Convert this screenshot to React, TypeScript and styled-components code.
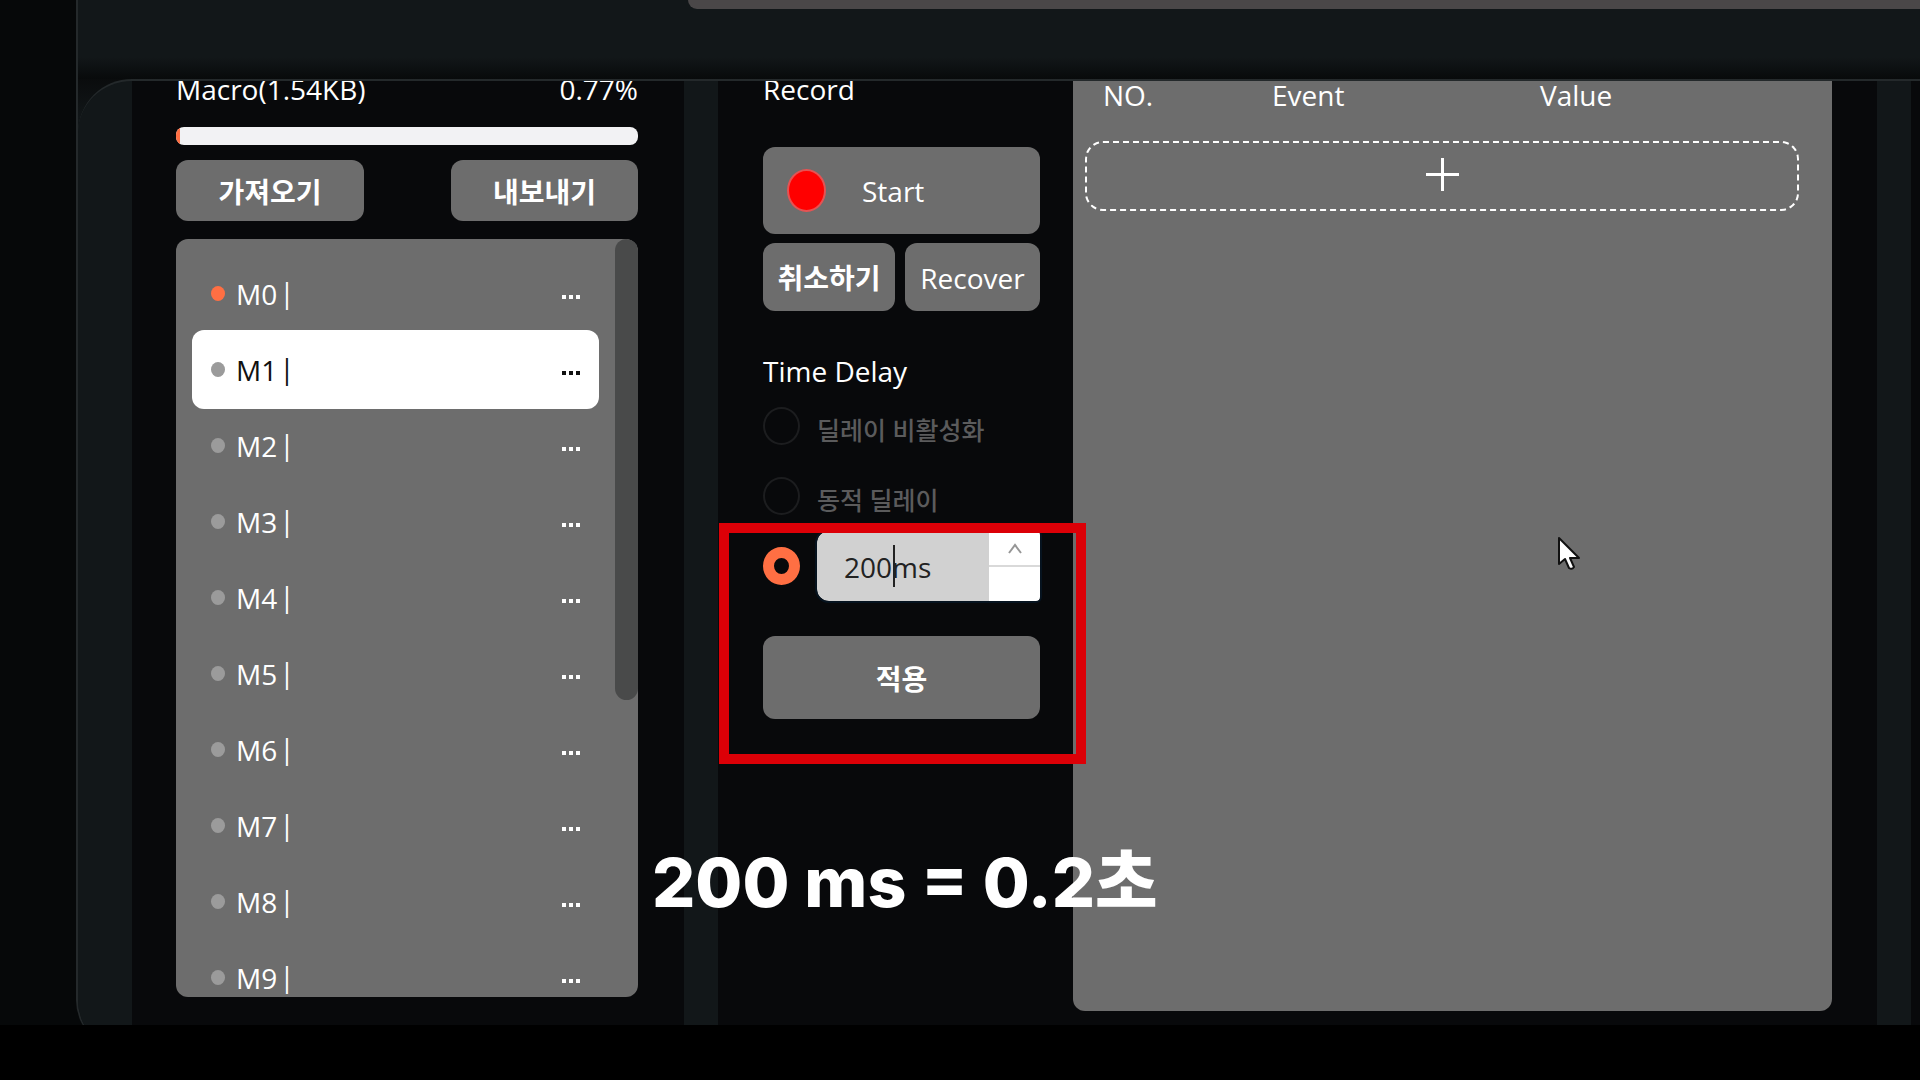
import React, { useState } from "react";
import styled, { createGlobalStyle } from "styled-components";

const color = {
  backdrop: "#060809",
  frame: "#121719",
  panel: "#08090b",
  surface: "#6d6d6d",
  line: "#24292b",
  accent: "#ff6f43",
  text: "#ffffff",
};

const GlobalStyle = createGlobalStyle`
  * { box-sizing: border-box; }
  body { margin: 0; background: #000; overflow: hidden; }
  body, button, input {
    font-family: "Open Sans", "Noto Sans CJK KR", sans-serif;
    font-size: 28px;
    font-weight: 500;
    line-height: 40px;
    color: ${color.text};
  }
`;

const Page = styled.div`
  position: relative;
  display: flex;
  flex-direction: column;
  height: 100vh;
`;

const Viewport = styled.main`
  display: flex;
  flex: 1;
  min-height: 0;
  padding-left: 76px;
  overflow: hidden;
  background: ${color.backdrop};
`;

const Letterbox = styled.footer`
  height: 55px;
  background: #000;
`;

const AppFrame = styled.div`
  display: flex;
  flex: 1;
  flex-direction: column;
  margin-bottom: -25px;
  border-left: 2px solid ${color.line};
  border-bottom-left-radius: 50px;
  overflow: hidden;
  background: ${color.frame};
`;

const TopStrip = styled.header`
  flex: none;
  height: 79px;
  padding-left: 610px;
  background: linear-gradient(to top, #080a0b 0, ${color.frame} 22px);
`;

const TopTray = styled.div`
  height: 9px;
  border-bottom-left-radius: 9px;
  background: #4a4748;
`;

const Workspace = styled.div`
  display: flex;
  flex: 1;
  gap: 34px;
  min-height: 0;
  padding: 0 0 25px 54px;
  border-top: 2px solid ${color.line};
  border-top-left-radius: 54px;
  overflow: hidden;
  background: ${color.frame};
`;

const CornerBack = styled.div`
  display: flex;
  flex: 1;
  min-height: 0;
  flex-direction: column;
  background: linear-gradient(to bottom, #0a0c0d 0, ${color.frame} 40px);
`;

const MacroPanel = styled.section`
  display: flex;
  flex: none;
  flex-direction: column;
  width: 552px;
  padding: 0 46px 28px 44px;
  background: ${color.panel};
`;

const EditorPanel = styled.section`
  display: flex;
  flex: 1;
  gap: 33px;
  padding: 0 45px 0 45px;
  background: ${color.panel};
`;

const NextPanel = styled.div`
  flex: none;
  width: 9px;
  background: ${color.panel};
`;

const ScrolledTitle = styled.div`
  display: flex;
  flex: none;
  justify-content: space-between;
  margin-top: -12px;
`;

const Meter = styled.div`
  flex: none;
  height: 18px;
  margin-top: 18px;
  border-radius: 8px;
  overflow: hidden;
  background: #f2f2f4;
`;

const MeterFill = styled.div`
  height: 100%;
  background: ${color.accent};
`;

const ButtonRow = styled.div`
  display: flex;
  flex: none;
  justify-content: space-between;
`;

const Button = styled.button<{ $height: number; $width?: string; $bold?: boolean }>`
  display: flex;
  align-items: center;
  justify-content: center;
  width: ${(p) => p.$width ?? "100%"};
  height: ${(p) => p.$height}px;
  padding: 2px 0 0;
  border: 0;
  border-radius: 12px;
  background: ${color.surface};
  font-weight: ${(p) => (p.$bold ? 700 : 500)};
`;

const Toolbar = styled(ButtonRow)`
  margin: 15px 0 18px;
`;

const ListBox = styled.div`
  display: flex;
  flex: 1;
  min-height: 0;
  justify-content: space-between;
  border-radius: 12px;
  overflow: hidden;
  background: ${color.surface};
`;

const MacroList = styled.ul`
  flex: 1;
  margin: 0;
  padding: 15px 16px 0;
  list-style: none;
`;

const MacroItem = styled.li<{ $selected: boolean }>`
  display: flex;
  align-items: center;
  height: 79px;
  margin-bottom: -3px;
  padding: 0 19px;
  border-radius: 12px;
  background: ${(p) => (p.$selected ? "#fff" : "transparent")};
  color: ${(p) => (p.$selected ? "#111" : color.text)};
  font-weight: ${(p) => (p.$selected ? 400 : 500)};
`;

const StatusDot = styled.span<{ $active: boolean }>`
  width: 14px;
  height: 15px;
  margin-right: 11px;
  border-radius: 50%;
  background: ${(p) => (p.$active ? color.accent : "#9b9b9b")};
`;

const Divider = styled.span`
  margin-left: 2px;
  padding-bottom: 4px;
`;

const MoreButton = styled.button`
  display: flex;
  margin-left: auto;
  padding: 8px 0 0;
  border: 0;
  background: none;
  color: inherit;
`;

const ScrollThumb = styled.div`
  flex: none;
  width: 23px;
  height: 461px;
  border-radius: 12px;
  background: #494a4a;
`;

const RecordColumn = styled.div`
  display: flex;
  flex: none;
  flex-direction: column;
  width: 277px;
`;

const StartButton = styled(Button)`
  justify-content: flex-start;
  flex: none;
  gap: 36px;
  margin: 38px 0 9px;
  padding: 0 0 0 24px;
`;

const RecordDot = styled.span`
  width: 39px;
  height: 43px;
  border: 2px solid #e55353;
  border-radius: 50%;
  background: #ff0000;
`;

const SectionTitle = styled.h2`
  margin: 40px 0 0;
  font-size: 28px;
  font-weight: 500;
`;

const DelayOptions = styled.div`
  display: flex;
  flex-direction: column;
`;

const DelayOption = styled.div`
  display: flex;
  align-items: center;
  gap: 17px;
  height: 70px;
`;

const Radio = styled.input`
  appearance: none;
  flex: none;
  width: 37px;
  height: 38px;
  margin: 0;
  border: 2px solid #1c1d1f;
  border-radius: 50%;

  &:checked {
    border: 11px solid ${color.accent};
  }
`;

const OptionLabel = styled.label`
  padding-top: 8px;
  color: #5b5b5c;
  font-size: 25px;
  font-weight: 500;
`;

const NumberField = styled.div`
  position: relative;
  display: flex;
  flex: 1;
  height: 70px;
  border-radius: 12px 4px 4px 12px;
  overflow: hidden;
  background: #d1d1d1;
  outline: 2px solid #06131f;
`;

const NumberInput = styled.input`
  flex: 1;
  min-width: 0;
  padding: 2px 0 0 27px;
  border: 0;
  outline: 0;
  background: transparent;
  color: #222;
  font-weight: 400;
`;

const TextCaret = styled.span`
  position: absolute;
  top: 14px;
  left: 76px;
  width: 2px;
  height: 42px;
  background: #222;
`;

const Stepper = styled.div`
  display: flex;
  flex-direction: column;
  width: 51px;
`;

const StepButton = styled.button`
  display: flex;
  flex: 1;
  align-items: center;
  justify-content: center;
  padding: 0;
  border: 0;
  background: #fff;

  & + & {
    border-top: 2px solid #d9d9d9;
  }
`;

const ApplyButton = styled(Button)`
  flex: none;
  margin-top: 35px;
`;

const EventBoard = styled.div`
  flex: 1;
  min-width: 0;
  margin-bottom: 14px;
  padding-left: 12px;
  padding-right: 33px;
  border-radius: 0 0 12px 12px;
  background: ${color.surface};
`;

const EventTable = styled.table`
  width: 100%;
  margin-top: -6px;
  border-collapse: collapse;
  table-layout: fixed;

  td {
    padding: 26px 0 0;
  }
`;

const HeadCell = styled.th<{ $width?: string }>`
  width: ${(p) => p.$width ?? "auto"};
  padding: 0 0 0 18px;
  font-weight: 500;
  text-align: left;
`;

const AddButton = styled.button`
  display: flex;
  align-items: center;
  justify-content: center;
  width: 100%;
  height: 70px;
  padding: 0 0 4px;
  border: 2px dashed #fff;
  border-radius: 18px;
  background: none;
`;

const Highlight = styled.div`
  position: absolute;
  top: 523px;
  left: 719px;
  width: 367px;
  height: 241px;
  border: 10px solid #dc0007;
  pointer-events: none;
`;

const Subtitle = styled.p`
  position: absolute;
  top: 832px;
  left: 652px;
  margin: 0;
  font-family: Inter, "Noto Sans CJK KR", sans-serif;
  font-size: 68px;
  font-weight: 800;
  line-height: 100px;
  white-space: nowrap;
`;

const Pointer = styled.svg`
  position: absolute;
  top: 536px;
  left: 1557px;
`;

const macros = ["M0", "M1", "M2", "M3", "M4", "M5", "M6", "M7", "M8", "M9"];
const usedPercent = 0.77;

const MoreIcon = () => (
  <svg width="18" height="5" viewBox="0 0 18 5" fill="currentColor" aria-hidden="true">
    <rect x="0" y="0" width="4" height="4" />
    <rect x="7" y="0" width="4" height="4" />
    <rect x="14" y="0" width="4" height="4" />
  </svg>
);

const PlusIcon = () => (
  <svg width="33" height="33" viewBox="0 0 33 33" stroke="#fff" strokeWidth="3" aria-hidden="true">
    <path d="M0 16.5H33M16.5 0V33" />
  </svg>
);

const ChevronUp = () => (
  <svg width="14" height="12" viewBox="0 0 14 12" fill="none" stroke="#969696" strokeWidth="2" aria-hidden="true">
    <path d="M1 11L7 3L13 11" />
  </svg>
);

export default function App() {
  const [selected, setSelected] = useState("M1");
  const [mode, setMode] = useState("fixed");
  const [delay, setDelay] = useState("200ms");

  return (
    <Page>
      <GlobalStyle />
      <Viewport>
        <AppFrame>
          <TopStrip>
            <TopTray />
          </TopStrip>
          <CornerBack>
            <Workspace>
              <MacroPanel>
                <ScrolledTitle>
                  <span>Macro(1.54KB)</span>
                  <span>{usedPercent}%</span>
                </ScrolledTitle>
                <Meter>
                  <MeterFill style={{ width: `${usedPercent}%` }} />
                </Meter>
                <Toolbar>
                  <Button $height={61} $width="188px" $bold>가져오기</Button>
                  <Button $height={61} $width="187px" $bold>내보내기</Button>
                </Toolbar>
                <ListBox>
                  <MacroList>
                    {macros.map((name) => (
                      <MacroItem key={name} $selected={name === selected} onClick={() => setSelected(name)}>
                        <StatusDot $active={name === "M0"} />
                        <span>{name}</span>
                        <Divider>|</Divider>
                        <MoreButton aria-label={`${name} options`}>
                          <MoreIcon />
                        </MoreButton>
                      </MacroItem>
                    ))}
                  </MacroList>
                  <ScrollThumb />
                </ListBox>
              </MacroPanel>

              <EditorPanel>
                <RecordColumn>
                  <ScrolledTitle>Record</ScrolledTitle>
                  <StartButton $height={87}>
                    <RecordDot />
                    Start
                  </StartButton>
                  <ButtonRow>
                    <Button $height={68} $width="132px" $bold>취소하기</Button>
                    <Button $height={68} $width="135px">Recover</Button>
                  </ButtonRow>
                  <SectionTitle>Time Delay</SectionTitle>
                  <DelayOptions>
                    <DelayOption>
                      <Radio type="radio" name="delay" id="delay-off" checked={mode === "off"} onChange={() => setMode("off")} />
                      <OptionLabel htmlFor="delay-off">딜레이 비활성화</OptionLabel>
                    </DelayOption>
                    <DelayOption>
                      <Radio type="radio" name="delay" id="delay-dynamic" checked={mode === "dynamic"} onChange={() => setMode("dynamic")} />
                      <OptionLabel htmlFor="delay-dynamic">동적 딜레이</OptionLabel>
                    </DelayOption>
                    <DelayOption>
                      <Radio type="radio" name="delay" aria-label="Fixed delay" checked={mode === "fixed"} onChange={() => setMode("fixed")} />
                      <NumberField>
                        <NumberInput aria-label="Delay" value={delay} onChange={(e) => setDelay(e.target.value)} />
                        <TextCaret />
                        <Stepper>
                          <StepButton aria-label="Increase">
                            <ChevronUp />
                          </StepButton>
                          <StepButton aria-label="Decrease" />
                        </Stepper>
                      </NumberField>
                    </DelayOption>
                  </DelayOptions>
                  <ApplyButton $height={83} $bold>적용</ApplyButton>
                </RecordColumn>

                <EventBoard>
                  <EventTable>
                    <thead>
                      <tr>
                        <HeadCell $width="169px">NO.</HeadCell>
                        <HeadCell $width="268px">Event</HeadCell>
                        <HeadCell>Value</HeadCell>
                      </tr>
                    </thead>
                    <tbody>
                      <tr>
                        <td colSpan={3}>
                          <AddButton aria-label="Add event">
                            <PlusIcon />
                          </AddButton>
                        </td>
                      </tr>
                    </tbody>
                  </EventTable>
                </EventBoard>
              </EditorPanel>
              <NextPanel />
            </Workspace>
          </CornerBack>
        </AppFrame>
      </Viewport>
      <Letterbox />

      <Highlight />
      <Subtitle>200 ms = 0.2초</Subtitle>
      <Pointer width="25" height="36" viewBox="0 0 25 36" aria-hidden="true">
        <path
          d="M2 2V28L8 23L12 32Q15 34 17 31L13 22H22Z"
          fill="#fff"
          stroke="#111"
          strokeWidth="2"
          strokeLinejoin="round"
        />
      </Pointer>
    </Page>
  );
}
